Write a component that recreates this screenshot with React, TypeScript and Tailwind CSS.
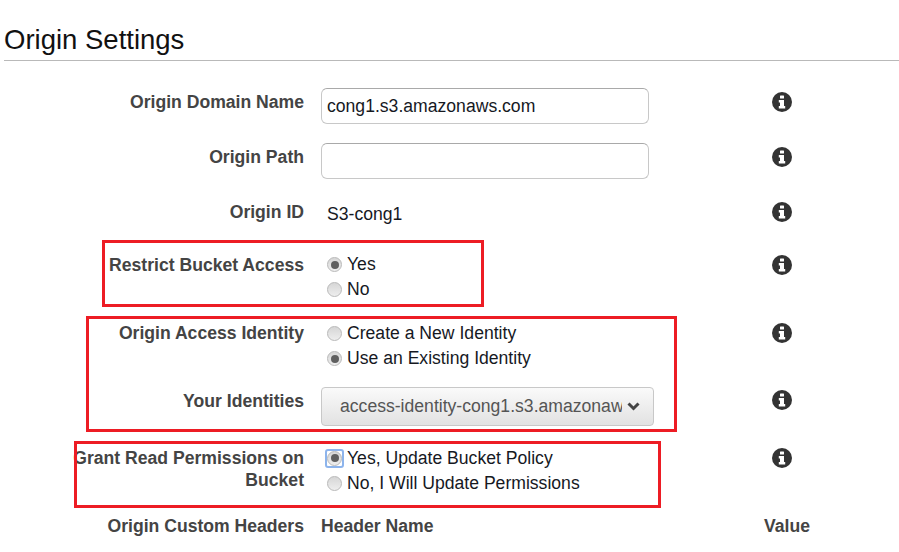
import React from 'react';

function InfoIcon() {
  return (
    <svg width="20" height="20" viewBox="0 0 20 20" className="block">
      <circle cx="10" cy="10" r="10" fill="#333333" />
      <rect x="8" y="3.5" width="4" height="3" rx="0.5" fill="#ffffff" />
      <path d="M6.8 8h5.2v6h1.2v2.6H6.8V14H8v-3.4H6.8z" fill="#ffffff" />
    </svg>
  );
}

function Radio({ label, checked, focused, className = 'h-[25px]' }: { label: string; checked?: boolean; focused?: boolean; className?: string }) {
  return (
    <div className={`flex items-center ${className}`}>
      <span className="relative w-[15px] h-[15px] ml-[6px] mr-[5px] shrink-0 rounded-full border border-[#b9b9b9] bg-gradient-to-b from-[#d6d6d6] to-[#eeeeee] flex items-center justify-center">
        {focused && <span className="absolute -inset-[3px] rounded-[3px] border-2 border-[#8db4ec]" />}
        {checked && <span className="w-[8px] h-[8px] rounded-full bg-[#5f5f5f]" />}
      </span>
      <span className="text-[#16191f] whitespace-nowrap">{label}</span>
    </div>
  );
}

function Row({ label, height, aside, labelClass = 'pt-[2px] leading-[25px]', valueClass = '', infoClass = 'pt-[4px]', children }: {
  label: React.ReactNode;
  height: string;
  aside?: React.ReactNode;
  labelClass?: string;
  valueClass?: string;
  infoClass?: string;
  children: React.ReactNode;
}) {
  return (
    <div className={`grid grid-cols-[304px_17px_443px_1fr] ${height}`}>
      <div className={`text-right font-bold text-[#444444] ${labelClass}`}>{label}</div>
      <div />
      <div className={valueClass}>{children}</div>
      <div className={infoClass}>{aside ?? <div className="pl-[8px]"><InfoIcon /></div>}</div>
    </div>
  );
}

const inputClass = 'w-[328px] h-[36px] rounded-[6px] border border-[#c8c8c8] border-t-[#a9a9a9] bg-white px-[5px] text-[#16191f] outline-none';

export default function App() {
  return (
    <div className="relative h-[552px] overflow-hidden bg-white text-[17.6px] font-['Liberation_Sans',Arial,sans-serif]">
      <div className="pl-[4px] pt-[24px]">
        <h1 className="text-[27.5px] leading-[32px] text-[#111111] border-b border-[#b9b9b9] pb-[4px]">Origin Settings</h1>
      </div>

      <div className="pt-[27px]">
        <Row label="Origin Domain Name" height="h-[55px]">
          <input className={inputClass} defaultValue="cong1.s3.amazonaws.com" />
        </Row>
        <Row label="Origin Path" height="h-[55px]">
          <input className={inputClass} defaultValue="" />
        </Row>
        <Row label="Origin ID" height="h-[53px]">
          <div className="px-[6px] pt-[4px] leading-[25px] text-[#16191f]">S3-cong1</div>
        </Row>
        <Row label="Restrict Bucket Access" height="h-[68px]" valueClass="pt-[1px]">
          <Radio label="Yes" checked />
          <Radio label="No" />
        </Row>
        <Row label="Origin Access Identity" height="h-[68px]" valueClass="pt-[1px]">
          <Radio label="Create a New Identity" className="h-[26px]" />
          <Radio label="Use an Existing Identity" checked />
        </Row>
        <Row label="Your Identities" height="h-[58px]" infoClass="pt-[3px]">
          <div className="flex items-center w-[333px] h-[39px] rounded-[4px] border border-[#c8c8c8] bg-gradient-to-b from-[#fafafa] to-[#e2e2e2] text-[#555555] pl-[18px] pr-[13px]">
            <span className="w-[282px] overflow-hidden whitespace-nowrap">access-identity-cong1.s3.amazonaws.com</span>
            <svg width="13" height="9" viewBox="0 0 13 9" className="ml-auto">
              <path d="M1.5 1.5 6.5 6.5l5-5" fill="none" stroke="#444444" strokeWidth="3" />
            </svg>
          </div>
        </Row>
        <Row
          label={<>Grant Read Permissions on<br />Bucket</>}
          height="h-[69px]"
          labelClass="pt-[2px] leading-[22px]"
          infoClass="pt-[3px]"
        >
          <Radio label="Yes, Update Bucket Policy" checked focused className="h-[26px]" />
          <Radio label="No, I Will Update Permissions" />
        </Row>
        <Row
          label="Origin Custom Headers"
          height="h-[30px]"
          labelClass="leading-[25px]"
          infoClass=""
          aside={<span className="block font-bold text-[#444444] leading-[25px]">Value</span>}
        >
          <span className="block font-bold text-[#444444] leading-[25px]">Header Name</span>
        </Row>
      </div>

      {/* Red annotation boxes drawn over the screenshot */}
      <div className="absolute left-[102px] top-[240px] w-[382px] h-[67px] border-[3px] border-[#ed1c24]" />
      <div className="absolute left-[86px] top-[316px] w-[591px] h-[116px] border-[3px] border-[#ed1c24]" />
      <div className="absolute left-[74px] top-[441px] w-[587px] h-[67px] border-[3px] border-[#ed1c24]" />
    </div>
  );
}
